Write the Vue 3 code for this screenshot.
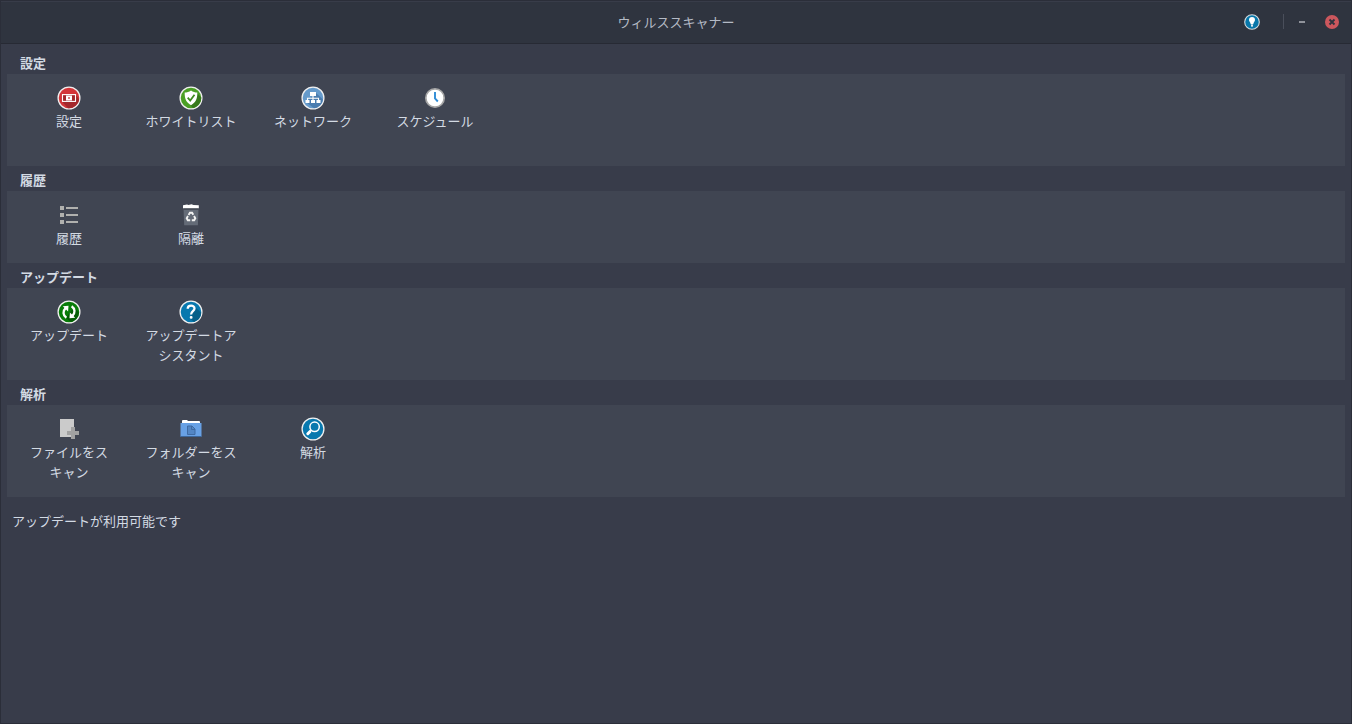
<template>
  <div class="window" lang="ja">
    <header class="titlebar">
      <h1 class="title">ウィルススキャナー</h1>
      <div class="window-controls">
        <button class="ctl about" type="button" aria-label="ヒント">
          <svg width="16" height="16" viewBox="0 0 16 16">
            <circle cx="8" cy="8" r="7.3" fill="#0877aa" stroke="#d5dade" stroke-width="1.1" />
            <path d="M8 3a3 3 0 0 0-3 3c0 1.7 1.6 2.4 1.7 4.2h2.6C9.400 8.400 11 7.700 11 6a3 3 0 0 0-3-3z" fill="#fff" />
            <path d="M7 10.500h2v1.800l-1 .8-1-.8z" fill="#e4edf2" />
          </svg>
        </button>
        <span class="divider"></span>
        <button class="ctl" type="button" aria-label="最小化">
          <svg width="16" height="16" viewBox="0 0 16 16">
            <rect x="5" y="7" width="6" height="2" fill="#90939b" />
          </svg>
        </button>
        <button class="ctl" type="button" aria-label="閉じる">
          <svg width="16" height="16" viewBox="0 0 16 16">
            <circle cx="8" cy="8" r="7" fill="#cc575d" />
            <path d="M5.500 5.500l5 5m0-5l-5 5" stroke="#2f343f" stroke-width="1.900" />
          </svg>
        </button>
      </div>
    </header>

    <main class="content">
      <section v-for="group in groups" :key="group.title" class="group">
        <h2 class="group-title">{{ group.title }}</h2>
        <div class="panel" :class="{ tall: group.tall }">
          <button v-for="item in group.items" :key="item.label" class="item" type="button">
            <svg class="icon" width="24" height="24" viewBox="0 0 24 24" v-html="icons[item.icon]"></svg>
            <span class="label">{{ item.label }}</span>
          </button>
        </div>
      </section>
      <p class="status">アップデートが利用可能です</p>
    </main>
  </div>
</template>

<script setup>
const groups = [
  {
    title: '設定',
    tall: true,
    items: [
      { label: '設定', icon: 'settings' },
      { label: 'ホワイトリスト', icon: 'whitelist' },
      { label: 'ネットワーク', icon: 'network' },
      { label: 'スケジュール', icon: 'clock' }
    ]
  },
  {
    title: '履歴',
    items: [
      { label: '履歴', icon: 'list' },
      { label: '隔離', icon: 'trash' }
    ]
  },
  {
    title: 'アップデート',
    tall: true,
    items: [
      { label: 'アップデート', icon: 'update' },
      { label: 'アップデートアシスタント', icon: 'help' }
    ]
  },
  {
    title: '解析',
    tall: true,
    items: [
      { label: 'ファイルをスキャン', icon: 'file' },
      { label: 'フォルダーをスキャン', icon: 'folder' },
      { label: '解析', icon: 'search' }
    ]
  }
]

const disc = (fill) => `<circle cx="12" cy="12" r="10.9" fill="${fill}" stroke="#f0f0f0" stroke-width="1.3"/>`

const icons = {
  settings: disc('#d33438') + `
    <path d="M5 15.500L11 22.200A10.300 10.300 0 0 0 22.200 13.500L19 9z" fill="#a3272b"/>
    <rect x="5.500" y="8.600" width="13" height="6.800" fill="#a3272b" stroke="#fff" stroke-width="1.100"/>
    <rect x="9" y="9.500" width="6" height="5" fill="#fff"/>
    <rect x="11" y="11" width="2" height="2" fill="#d98184"/>`,
  whitelist: disc('#4a9f24') + `
    <path d="M18 7l4.300 4.500A10.300 10.300 0 0 1 14 22l-3-3z" fill="#37791b"/>
    <path d="M12 4.500c2 1.500 4 2 6.300 2 .2 5.500-1.300 10-6.300 12.700C7 16.500 5.500 12 5.700 6.500 8 6.500 10 6 12 4.500z" fill="#fff"/>
    <path d="M8.700 11.700l2.500 2.800 4.300-5.700" fill="none" stroke="#3f8b20" stroke-width="1.800"/>`,
  network: disc('#659acb') + `
    <path d="M15 7l7 6.500A10.300 10.300 0 0 1 13 22.300L5 16z" fill="#4a7caf"/>
    <rect x="9" y="6" width="6" height="4" fill="#fff"/>
    <path d="M12 10v4M6.500 14.500v-2.300h11v2.300" fill="none" stroke="#fff" stroke-width="1.100"/>
    <rect x="4.500" y="14" width="4" height="3" fill="#fff"/>
    <rect x="10" y="14" width="4" height="3" fill="#fff"/>
    <rect x="15.500" y="14" width="4" height="3" fill="#fff"/>`,
  clock: `
    <circle cx="12" cy="12" r="9.200" fill="#fff" stroke="#a6a6a6" stroke-width="1.700"/>
    <path d="M12 6v6.500l2.800 3" fill="none" stroke="#2f8bd5" stroke-width="1.900"/>`,
  list: `
    <g fill="#b0b0ae">
      <rect x="3" y="3" width="4" height="4"/><rect x="9" y="4" width="12" height="2"/>
      <rect x="3" y="10" width="4" height="4"/><rect x="9" y="11" width="12" height="2"/>
      <rect x="3" y="17" width="4" height="4"/><rect x="9" y="18" width="12" height="2"/>
    </g>`,
  trash: `
    <path d="M4.500 5h15l-.6 17.300H5.200z" fill="#646b77"/>
    <path d="M4.500 5h15v1.600h-15z" fill="#343a45"/>
    <path d="M4 2.300l4-.8 1.500.5 3-.8 2 .7 5.300.4v2.900H4z" fill="#fff"/>
    <g fill="none" stroke="#f2f2f2" stroke-width="1.900">
      <path d="M9.600 12l1.300-2.200h2.200l1.200 2"/>
      <path d="M15 13l1.300 2.200-1.100 2h-2.400"/>
      <path d="M11.200 17.200H8.800l-1.100-2L9 13"/>
    </g>`,
  update: disc('#087c08') + `
    <path d="M17 7l5 5.500A10.300 10.300 0 0 1 14 22l-5-4z" fill="#045c04"/>
    <g fill="none" stroke="#fff" stroke-width="2.300">
      <path d="M9.400 17.800C5.800 15.500 5.600 11 8.600 8.200"/>
      <path d="M14.600 6.200C18.200 8.500 18.400 13 15.400 15.800"/>
    </g>
    <path d="M5.800 6.200l5.700-.4-.4 5.800z" fill="#fff"/>
    <path d="M18.200 17.800l-5.700.4.4-5.800z" fill="#fff"/>`,
  help: disc('#0878ae') + `
    <path d="M16 7l6.300 5.800A10.300 10.300 0 0 1 15 22l-4-3.500z" fill="#056089"/>
    <path d="M8.700 8.700c0-4 6.800-4 6.800-.3 0 2.700-3.400 2.700-3.400 6" fill="none" stroke="#fff" stroke-width="2.300"/>
    <rect x="10.800" y="16" width="2.700" height="2.700" rx="1" fill="#fff"/>`,
  file: `
    <rect x="3" y="2" width="14" height="18" fill="#cbcbcb"/>
    <path d="M14 10h4v4h4v4h-4v4h-4v-4h-4v-4h4z" fill="#a2a2a2"/>`,
  folder: `
    <path d="M3 6V3.500L4 3h4l1 1h11.500l.5 1v3H3z" fill="#fff"/>
    <path d="M1.500 6h21v13.500l-.5.500H2l-.5-.5z" fill="#68a1e5"/>
    <path d="M1.500 19h21v1h-21z" fill="#3d679b"/>
    <path d="M8.500 9h4.500l3 3v5.500H8.500z" fill="#5386c4" stroke="#3f6ba3"/>
    <path d="M12.500 9v3.500H16" fill="none" stroke="#3f6ba3"/>`,
  search: disc('#0878ae') + `
    <circle cx="13.600" cy="9.800" r="4.700" fill="#0878ae" stroke="#fff" stroke-width="1.500"/>
    <path d="M10.300 13.200L8.500 15" stroke="#fff" stroke-width="1.500"/>
    <path d="M8.800 14.700L6.800 16.700" stroke="#fff" stroke-width="3" stroke-linecap="round"/>`
}
</script>

<style>
body {
  margin: 0;
  background: #383c4a;
}
</style>

<style scoped>
.window {
  box-sizing: border-box;
  min-height: 100vh;
  border: 1px solid #2b2e39;
  background: #383c4a;
  color: #d3dae3;
  font-family: "Noto Sans CJK JP", "Noto Sans", sans-serif;
  font-size: 13px;
  line-height: 20px;
}

.titlebar {
  display: grid;
  grid-template-columns: 1fr auto 1fr;
  align-items: center;
  box-sizing: border-box;
  height: 43px;
  padding-bottom: 2px;
  border-top: 1px solid #383c49;
  border-bottom: 1px solid #272a34;
  background: #2f343f;
}

.title {
  grid-column: 2;
  margin: 0;
  color: #b4bac5;
  font-size: 13px;
  font-weight: 400;
}

.window-controls {
  display: flex;
  align-items: center;
  justify-content: flex-end;
  padding-right: 11px;
}

.ctl {
  display: flex;
  padding: 0;
  border: 0;
  background: none;
  cursor: pointer;
}

.ctl + .ctl {
  margin-left: 14px;
}

.divider {
  width: 1px;
  height: 15px;
  margin: 0 10px 0 23px;
  background: #4a4f5b;
}

.content {
  padding: 5px 6px 0;
}

.group-title {
  margin: 0;
  padding: 4px 13px 1px;
  font-size: 13px;
  font-weight: 700;
}

.panel {
  display: flex;
  flex-wrap: wrap;
  align-items: flex-start;
  box-sizing: border-box;
  min-height: 72px;
  padding: 12px 1px 14px;
  background: #404552;
}

.panel.tall {
  min-height: 92px;
}

.item {
  display: flex;
  flex-direction: column;
  align-items: center;
  gap: 1px;
  width: 122px;
  padding: 0 12px;
  border: 0;
  background: none;
  color: inherit;
  font: inherit;
  text-align: center;
  cursor: pointer;
}

.label {
  line-break: strict;
}

.status {
  margin: 14px 0 0;
  padding: 0 5px;
}
</style>
